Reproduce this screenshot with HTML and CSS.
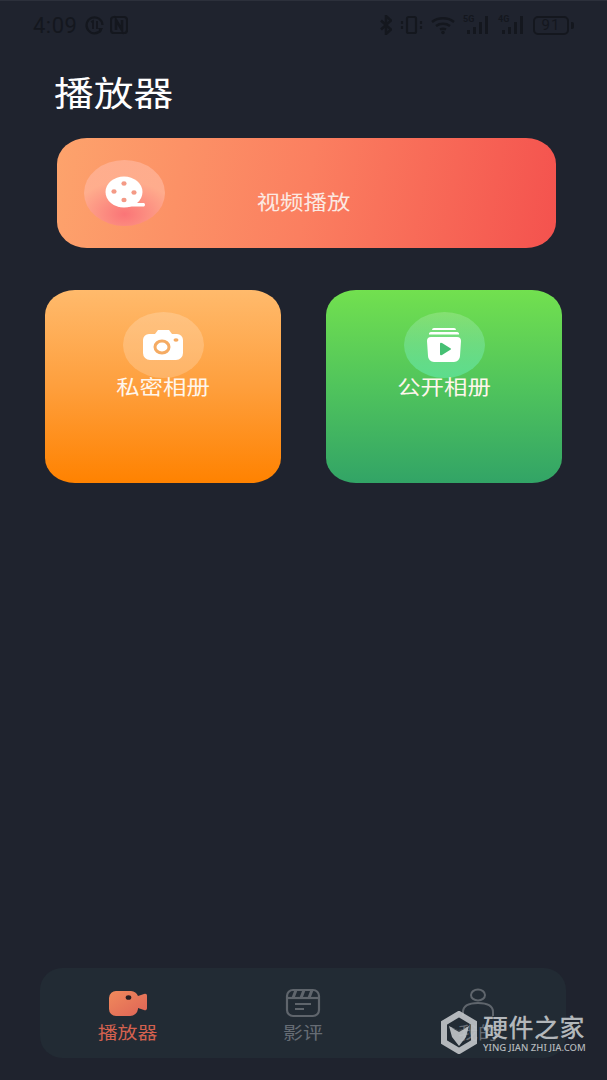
FILE: index.html
```html
<!DOCTYPE html>
<html lang="zh-CN">
<head>
  <meta charset="UTF-8">
  <meta name="viewport" content="width=device-width, initial-scale=1.0">
  <title>播放器</title>
  <link rel="stylesheet" href="styles.css">
</head>
<body>
  <div class="page">
    <!-- Status bar -->
    <header class="status-bar">
      <div class="status-left">
        <span class="time">4:09</span>
        <svg width="20" height="20" viewBox="0 0 20 20" fill="none" stroke="#14171e" stroke-width="2.200">
          <path d="M17 15a8 8 0 1 1 1.500-5"/>
          <path d="M7 7l2-1v8M13 6v8" stroke-width="1.800"/>
          <path d="M14 13l5 0-2.500 4.500z" fill="#14171e" stroke="none"/>
        </svg>
        <svg width="18" height="20" viewBox="0 0 18 20" fill="none" stroke="#14171e" stroke-width="2.200">
          <rect x="1" y="2" width="16" height="16" rx="3"/>
          <path d="M6 15V5l6 10V5" stroke-width="2.600"/>
        </svg>
      </div>
      <div class="status-right">
        <svg class="st-bt" width="12" height="20" viewBox="0 0 12 20" fill="none" stroke="#14171e" stroke-width="2.600">
          <path d="M1 5.500l10 9-5 4.500V1l5 4.500-10 9"/>
        </svg>
        <svg class="st-vib" width="23" height="20" viewBox="0 0 23 20" fill="none" stroke="#14171e" stroke-width="2.200">
          <rect x="7" y="2" width="9" height="16" rx="1.500"/>
          <path d="M2 6v8M21 6v8" stroke-dasharray="3 2"/>
        </svg>
        <svg class="st-wifi" width="24" height="20" viewBox="0 0 24 20" fill="none" stroke="#14171e" stroke-width="2.400">
          <path d="M1 7c6-5 16-5 22 0M5 11c4-3 10-3 14 0M9 14.500c2-1 4-1 6 0"/>
          <circle cx="12" cy="17.500" r="1.800" fill="#14171e" stroke="none"/>
        </svg>
        <div class="signal">
          <span class="sig-tag">5G</span>
          <svg width="27" height="20" viewBox="0 0 27 20" fill="#14171e">
            <rect x="4" y="15" width="3" height="4"/><rect x="10" y="12" width="3" height="7"/>
            <rect x="16" y="7" width="3" height="12"/><rect x="22" y="1" width="3" height="18"/>
          </svg>
        </div>
        <div class="signal">
          <span class="sig-tag">4G</span>
          <svg width="27" height="20" viewBox="0 0 27 20" fill="#14171e">
            <rect x="4" y="15" width="3" height="4"/><rect x="10" y="12" width="3" height="7"/>
            <rect x="16" y="7" width="3" height="12"/><rect x="22" y="1" width="3" height="18"/>
          </svg>
        </div>
        <div class="battery"><span>91</span></div>
        <div class="battery-tip"></div>
      </div>
    </header>

    <!-- Contenido principal -->
    <main class="content">
      <h1 class="title"><span>播放器</span></h1>

      <a class="banner">
        <div class="bubble bubble-red">
          <svg width="50" height="40" viewBox="0 0 50 40">
            <ellipse cx="24" cy="19" rx="18.500" ry="15.500" fill="#fff"/>
            <path d="M30 30h14a2 2 0 0 1 0 3.500H24z" fill="#fff"/>
            <g fill="#f49a86">
              <ellipse cx="24" cy="10.500" rx="2.600" ry="2.200"/>
              <ellipse cx="24" cy="27" rx="2.600" ry="2.200"/>
              <ellipse cx="14" cy="18.500" rx="2.600" ry="2.200"/>
              <ellipse cx="34" cy="19.500" rx="2.600" ry="2.200"/>
            </g>
          </svg>
        </div>
        <span class="label banner-label">视频播放</span>
      </a>

      <div class="cards">
        <a class="card card-orange">
          <div class="bubble">
            <svg width="42" height="32" viewBox="0 0 42 32">
              <path d="M7 5h6l3-4h11l3 4h5a6 6 0 0 1 6 6v13a7 7 0 0 1-7 7H8a7 7 0 0 1-7-7V11a6 6 0 0 1 6-6z" fill="#fff"/>
              <ellipse cx="20" cy="18" rx="7" ry="6" fill="none" stroke="#f5ab63" stroke-width="3"/>
              <ellipse cx="34" cy="11" rx="2.500" ry="1.800" fill="#f5ab63"/>
            </svg>
          </div>
          <span class="label">私密相册</span>
        </a>
        <a class="card card-green">
          <div class="bubble bubble-green">
            <svg width="36" height="36" viewBox="0 0 36 36">
              <path d="M8 1h20a2 2 0 0 1 2 2H6a2 2 0 0 1 2-2zM5 5h26a2 2 0 0 1 2 2.500H3A2 2 0 0 1 5 5z" fill="#fff"/>
              <path d="M5 10h26a4 4 0 0 1 4 4l-1 15a6 6 0 0 1-6 6H8a6 6 0 0 1-6-6L1 14a4 4 0 0 1 4-4z" fill="#fff"/>
              <path d="M14 17q0-2 2-1l8 5q2 1 0 2l-8 5q-2 1-2-1z" fill="#45c073"/>
            </svg>
          </div>
          <span class="label">公开相册</span>
        </a>
      </div>
    </main>

    <!-- Navbar -->
    <nav class="tabbar">
      <a class="tab tab-active">
        <svg width="40" height="28" viewBox="0 0 40 28">
          <defs>
            <linearGradient id="camGrad" x1="0" y1="0" x2="1" y2="1">
              <stop offset="0" stop-color="#f08a5c"/>
              <stop offset="1" stop-color="#de6356"/>
            </linearGradient>
          </defs>
          <path d="M9 2h14a8 8 0 0 1 7 5l6-2a2 2 0 0 1 3 2v12a2 2 0 0 1-3 2l-6-2v1a8 8 0 0 1-8 7H8a7 7 0 0 1-7-7V9a7 7 0 0 1 8-7z" fill="url(#camGrad)"/>
          <ellipse cx="20.500" cy="8.500" rx="2.800" ry="2.300" fill="#2a1f22"/>
        </svg>
        <span class="tab-label">播放器</span>
      </a>
      <a class="tab">
        <svg width="36" height="30" viewBox="0 0 36 30" fill="none" stroke="#5f656c" stroke-width="2.200">
          <rect x="2" y="2" width="32" height="26" rx="6"/>
          <path d="M2 10h32"/>
          <path d="M11 2l-3 8M19 2l-3 8M27 2l-3 8" stroke-width="3"/>
          <path d="M10 16h16M10 21h9"/>
        </svg>
        <span class="tab-label">影评</span>
      </a>
      <a class="tab">
        <svg width="34" height="30" viewBox="0 0 34 30" fill="none" stroke="#5f656c" stroke-width="2">
          <ellipse cx="17" cy="7" rx="7" ry="5.500"/>
          <path d="M2 28v-4c0-6 6-9 15-9s15 3 15 9v4"/>
        </svg>
        <span class="tab-label">我的</span>
      </a>
    </nav>

    <!-- Marca de agua -->
    <div class="watermark">
      <svg width="38" height="43" viewBox="0 0 38 43">
        <path d="M19 3l15 9v19l-15 9-15-9V12z" fill="none" stroke="#c3c7ca" stroke-width="6"/>
        <path d="M9 15l10 5 10-5-3 11-7 9-7-9z" fill="#c3c7ca"/>
        <path d="M12 17l7 4 7-4-7 2z" fill="#3a4048"/>
      </svg>
      <div class="wm-text">
        <span class="wm-cn">硬件之家</span>
        <span class="wm-en">YING JIAN ZHI JIA.COM</span>
      </div>
    </div>
  </div>
</body>
</html>
```
FILE: styles.css
```css
* {
  box-sizing: border-box;
}

body {
  margin: 0;
  padding: 0;
  background: #1f232e;
  font-family: "Noto Sans CJK SC", "Noto Sans", sans-serif;
}

a {
  color: inherit;
  text-decoration: none;
}

.page {
  position: relative;
  height: 100vh;
  display: flex;
  flex-direction: column;
  overflow: hidden;
  border-top: 1px solid #2c303b;
}

/* Status bar */
.status-bar {
  height: 48px;
  padding: 0 33px;
  display: flex;
  justify-content: space-between;
  align-items: center;
  flex-shrink: 0;
}

.status-left {
  display: flex;
  align-items: center;
  gap: 6px;
}

.time {
  width: 45px;
  color: #14171e;
  font-family: "Roboto", sans-serif;
  font-size: 22px;
  letter-spacing: 0.5px;
}

.status-right {
  display: flex;
  align-items: center;
}

.st-bt,
.st-vib,
.st-wifi {
  margin-right: 8px;
}

.signal {
  position: relative;
  width: 27px;
  height: 20px;
  margin-right: 8px;
}

.sig-tag {
  position: absolute;
  left: 0;
  top: -1px;
  color: #14171e;
  font-family: "Roboto", sans-serif;
  font-size: 9px;
  font-weight: 700;
}

.battery {
  width: 36px;
  height: 19px;
  border: 2px solid #14171e;
  border-radius: 5px;
  color: #14171e;
  font-family: "Roboto", sans-serif;
  font-size: 15px;
  line-height: 15px;
  letter-spacing: 1px;
  text-align: center;
}

.battery-tip {
  width: 3px;
  height: 7px;
  margin-left: 2px;
  background: #14171e;
  border-radius: 0 2px 2px 0;
}

/* Contenido principal */
.content {
  flex: 1;
  padding: 0 45px;
}

.title {
  margin: 21px 0 0 9px;
  height: 44px;
  color: #fff;
  font-size: 34px;
  font-weight: 400;
  line-height: 44px;
}

.title span {
  display: inline-block;
  transform: scaleX(1.17);
  transform-origin: left center;
}

.banner {
  display: flex;
  width: 499px;
  height: 110px;
  margin: 24px 0 0 12px;
  padding: 22px 0 0 27px;
  border-radius: 30px / 26px;
  background: linear-gradient(100deg, #fda36c 0%, #fb7f60 50%, #f4524e 100%);
}

.bubble {
  width: 81px;
  height: 66px;
  flex-shrink: 0;
  display: flex;
  align-items: center;
  justify-content: center;
  border-radius: 50%;
  background: rgba(255, 255, 255, 0.2);
}

.bubble-red {
  background: radial-gradient(ellipse 62% 50% at 50% 82%, rgba(250, 115, 120, 0.95), rgba(255, 178, 150, 0.8) 100%);
}

.bubble-green {
  background: linear-gradient(180deg, rgba(255, 255, 255, 0.18), rgba(95, 225, 150, 0.85));
}

.label {
  display: inline-block;
  height: 24px;
  color: #fff6ec;
  font-size: 20px;
  line-height: 24px;
  white-space: nowrap;
  transform: scaleX(1.17);
}

.banner-label {
  margin: 30px 0 0 92px;
  width: 93px;
  display: flex;
  justify-content: center;
  color: #fbe9e2;
}

.cards {
  display: flex;
  justify-content: space-between;
  margin-top: 42px;
  width: 517px;
}

.card {
  display: flex;
  flex-direction: column;
  align-items: center;
  width: 236px;
  height: 193px;
  padding-top: 22px;
  border-radius: 30px / 25px;
}

.card .label {
  margin-top: -3px;
}

.card-orange {
  background: linear-gradient(180deg, #ffba6c 0%, #fe9f3d 50%, #ff8200 100%);
}

.card-green {
  background: linear-gradient(180deg, #72e04f 0%, #50c45c 50%, #32a466 100%);
}

/* Navbar */
.tabbar {
  display: flex;
  flex-shrink: 0;
  width: 526px;
  height: 90px;
  margin: 0 0 22px 40px;
  border-radius: 22px;
  background: #222b34;
}

.tab {
  flex: 1;
  display: flex;
  flex-direction: column;
  align-items: center;
  padding-top: 20px;
}

.tab svg {
  height: 30px;
}

.tab-label {
  display: inline-block;
  margin-top: 2px;
  color: #666c74;
  font-size: 17px;
  line-height: 24px;
  transform: scaleX(1.17);
}

.tab-active .tab-label {
  color: #d4614f;
}

/* Marca de agua */
.watermark {
  position: absolute;
  left: 440px;
  top: 1010px;
  display: flex;
  gap: 5px;
  color: #c3c7ca;
  opacity: 0.9;
}

.wm-text {
  display: flex;
  flex-direction: column;
}

.wm-cn {
  font-size: 25px;
  font-weight: 500;
  line-height: 30px;
  letter-spacing: 0.5px;
  white-space: nowrap;
}

.wm-en {
  font-family: "Noto Sans", sans-serif;
  font-size: 9.5px;
  font-weight: 500;
  line-height: 14px;
  white-space: nowrap;
}
```
